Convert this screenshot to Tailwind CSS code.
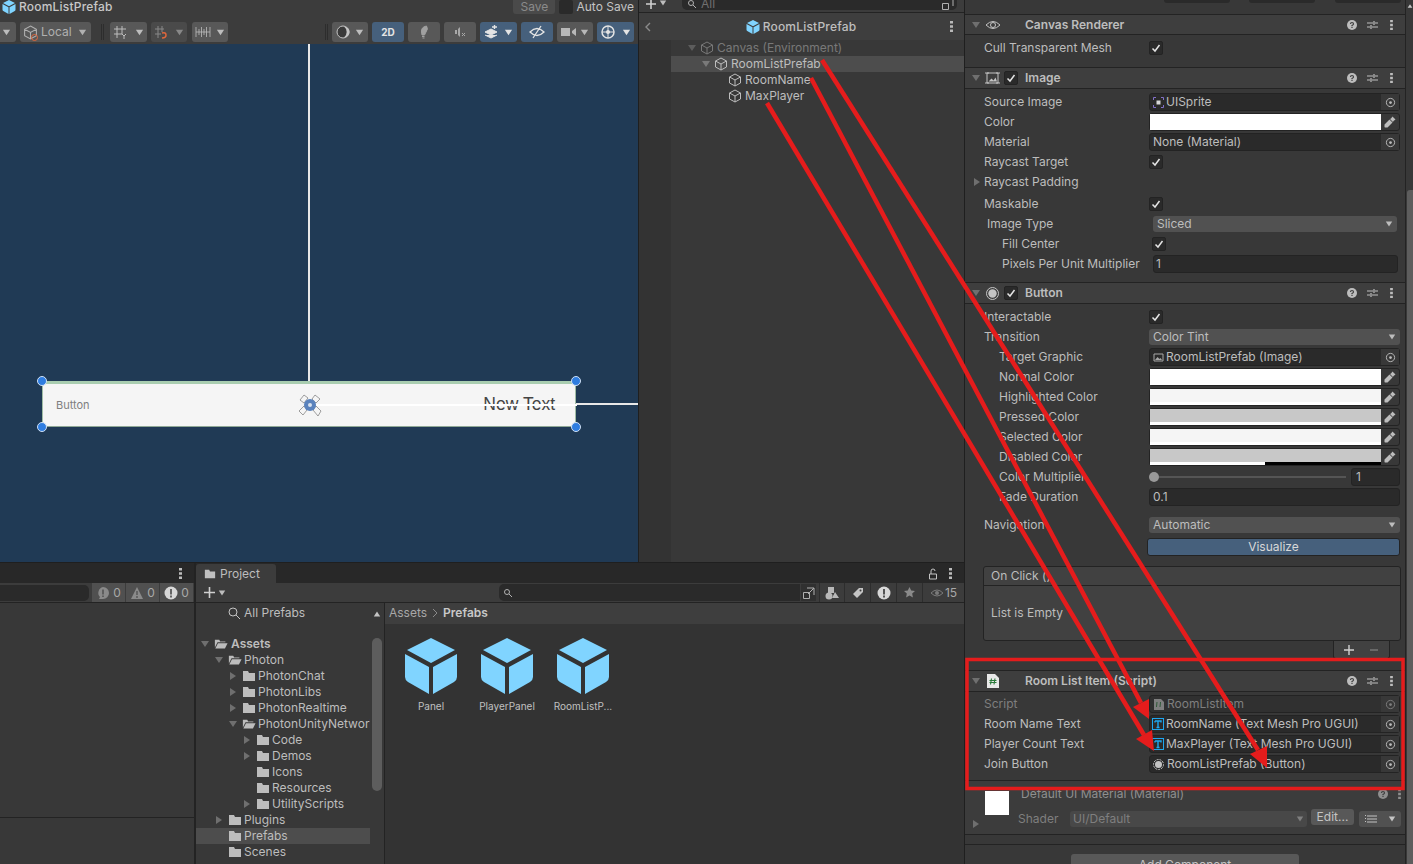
<!DOCTYPE html>
<html lang="en">

<head>
    <meta charset="UTF-8">
    <meta name="viewport" content="width=device-width, initial-scale=1.0">
    <title>Unity Editor - RoomListPrefab</title>
    <script src="https://cdn.jsdelivr.net/npm/@tailwindcss/browser@4"></script>
</head>

<body class="bg-[#1a1a1a]">

    <!-- shared icons -->
    <svg class="hidden">
        <symbol id="cube" viewBox="0 0 14 14"><path d="M7 1l5.5 3v6L7 13l-5.5-3V4zM1.5 4L7 7l5.5-3M7 7v6" fill="none" stroke="currentColor" stroke-width="1"/></symbol>
        <symbol id="prefab" viewBox="0 0 52 56"><path d="M26 0l24 12-24 13L2 12zM0 16l24 13v27L3 44q-3-2-3-5zM52 16L28 29v27l21-12q3-2 3-5z" fill="currentColor"/></symbol>
        <symbol id="down" viewBox="0 0 10 10"><path d="M1 2h8L5 8z" fill="currentColor"/></symbol>
        <symbol id="right" viewBox="0 0 10 10"><path d="M2 1v8l6-4z" fill="currentColor"/></symbol>
        <symbol id="folder" viewBox="0 0 14 12"><path d="M1 1h5l1 2h6v8H1z" fill="currentColor"/></symbol>
        <symbol id="folder-open" viewBox="0 0 16 12"><path d="M1 1h5l1 2h6v1H4L1 10zM4.500 5H15.500l-3 6H1.500z" fill="currentColor"/></symbol>
        <symbol id="target" viewBox="0 0 12 12"><circle cx="6" cy="6" r="4.500" fill="none" stroke="currentColor"/><circle cx="6" cy="6" r="1.500" fill="currentColor"/></symbol>
        <symbol id="dropper" viewBox="0 0 12 12"><path d="M8.500 .5l3 3-2 1.500-.5 1L6 3l1-.5zM5.500 3.500L8.500 6.500 3.500 11.500 1 11.500.5 11 .5 8.500z" fill="currentColor"/></symbol>
        <symbol id="check" viewBox="0 0 12 12"><path d="M2.500 6.500l2.500 2.500 4.500-6" fill="none" stroke="currentColor" stroke-width="1.500"/></symbol>
        <symbol id="help" viewBox="0 0 10 10"><circle cx="5" cy="5" r="5" fill="currentColor"/><path d="M3.500 4q0-1.500 1.500-1.500T6.500 4q0 .8-1.500 1.500v.7M5 7v1" fill="none" stroke="#3e3e3e" stroke-width="1.200"/></symbol>
        <symbol id="sliders" viewBox="0 0 11 10"><path d="M0 3h6M8 3h3M0 7h3M5 7h6M7 1v4M4 5v4" fill="none" stroke="currentColor" stroke-width="1.200"/></symbol>
        <symbol id="kebab" viewBox="0 0 3 11"><path d="M0 0h3v2.500H0zM0 4.250h3v2.500H0zM0 8.500h3V11H0z" fill="currentColor"/></symbol>
        <symbol id="tmp" viewBox="0 0 12 12"><rect x=".5" y=".5" width="11" height="11" fill="none" stroke="#1ea7f0"/><path d="M3 3h6v1.500M3 4.500V3M6 3v6.500M4.500 9.500h3" fill="none" stroke="#1ea7f0" stroke-width="1.400"/></symbol>
    </svg>

    <div class="relative flex h-[864px] w-[1413px] overflow-hidden text-[12px] leading-none font-['Inter',sans-serif] text-[#bdbdbd] whitespace-nowrap">

        <!-- scene, hierarchy, console, project -->
        <div class="flex w-[965px] flex-col border-r border-[#1f1f1f]">
            <div class="flex h-[562px]">

                <!-- scene view -->
                <section class="flex w-[639px] flex-col border-r border-[#1f1f1f] bg-[#3c3c3c]">
                    <div class="flex h-[14px] items-center justify-between overflow-hidden">
                        <div class="flex items-center gap-[3px] pb-[1px] pl-[2px] text-[#c8c8c8]">
                            <svg class="h-[14px] w-[14px] text-[#80d4ff]"><use href="#prefab"/></svg>
                            <span class="font-medium tracking-[0.2px]">RoomListPrefab</span>
                        </div>
                        <div class="flex items-center text-[#8a8a8a]">
                            <span class="flex h-[14px] w-[42px] items-center justify-center rounded-b-[3px] bg-[#4a4a4a]">Save</span>
                            <span class="ml-[4px] h-[14px] w-[14px] rounded-[2px] bg-[#2a2a2a]"></span>
                            <span class="ml-[3px] mr-[4px] text-[#c4c4c4]">Auto Save</span>
                        </div>
                    </div>
                    <div class="flex h-[30px] items-center pb-[1px] pt-[7px]">
                        <div class="flex h-5 w-[16px] items-center rounded-r-[3px] bg-[#585858] pl-[2px]"><svg class="h-[9px] w-[9px]"><use href="#down"/></svg></div>
                        <div class="ml-[4px] flex h-5 w-[71px] items-center gap-[2px] rounded-[3px] bg-[#585858] pl-[3px] text-[#b0b0b0]">
                            <span class="relative"><svg class="block h-[15px] w-[15px]"><use href="#cube"/></svg><span class="absolute -bottom-[1px] right-0 h-[7px] w-[7px] rounded-full border border-[#e0673c]"></span></span>
                            <span class="ml-[1px]">Local</span><svg class="ml-[4px] h-[9px] w-[9px]"><use href="#down"/></svg>
                        </div>
                        <div class="ml-[10px] h-4 w-[3px] border-x border-[#2d2d2d]"></div>
                        <div class="ml-[6px] flex h-5 w-[37px] items-center justify-between rounded-[3px] bg-[#585858] px-[3px]">
                            <svg class="h-[14px] w-[14px]" viewBox="0 0 14 14"><path d="M1 4h12M1 9h8M4 1v12M9 1v8M9 9l2 2 2-2M11 11v3" fill="none" stroke="currentColor"/></svg>
                            <svg class="h-[9px] w-[9px]"><use href="#down"/></svg>
                        </div>
                        <div class="ml-[4px] flex h-5 w-[36px] items-center justify-between rounded-[3px] bg-[#4a4a4a] px-[3px] text-[#888888]">
                            <svg class="h-[14px] w-[14px]" viewBox="0 0 14 14"><path d="M1 4h9M1 9h6M4 1v12M8 1v6" fill="none" stroke="currentColor"/><path d="M8 8q4-1 4 2t-4 3" fill="none" stroke="#e0673c" stroke-width="1.500"/></svg>
                            <svg class="h-[9px] w-[9px]"><use href="#down"/></svg>
                        </div>
                        <div class="ml-[5px] flex h-5 w-[36px] items-center justify-between rounded-[3px] bg-[#585858] px-[3px]">
                            <svg class="h-[14px] w-[16px]" viewBox="0 0 16 14"><path d="M1 2v10M15 2v10M1 7h14M4 4v6M6.500 2v10M9 4v6M11.500 2v10" fill="none" stroke="currentColor" stroke-width=".8"/></svg>
                            <svg class="h-[9px] w-[9px]"><use href="#down"/></svg>
                        </div>
                        <div class="ml-[97px] h-4 w-[3px] border-x border-[#2d2d2d]"></div>
                        <div class="ml-[4px] flex h-5 w-[36px] items-center justify-between rounded-[3px] bg-[#585858] px-[4px]">
                            <svg class="h-[14px] w-[14px]" viewBox="0 0 14 14"><circle cx="7" cy="7" r="6" fill="#3a3a3a" stroke="#c4c4c4"/><path d="M8 1.500a5.500 5.500 0 0 1 0 11 7 7 0 0 0 0-11z" fill="#c4c4c4"/></svg>
                            <svg class="h-[9px] w-[9px]"><use href="#down"/></svg>
                        </div>
                        <div class="ml-[4px] flex h-5 w-[32px] items-center justify-center rounded-[3px] bg-[#46607c] text-[10px] font-bold text-[#e4e4e4]">2D</div>
                        <div class="ml-[4px] flex h-5 w-[32px] items-center justify-center rounded-[3px] bg-[#585858]">
                            <svg class="h-[14px] w-[14px]" viewBox="0 0 14 14"><path d="M9.500 1q2 3-.5 6l-1.500 3H5L4.500 7Q4 2 9.500 1zM5 11.500h2.500M5.500 13h2" fill="#a0a0a0" stroke="#a0a0a0" stroke-width="1"/></svg>
                        </div>
                        <div class="ml-[4px] flex h-5 w-[32px] items-center justify-center rounded-[3px] bg-[#585858]">
                            <svg class="h-[12px] w-[12px]" viewBox="0 0 12 12"><path d="M1 4h2v4H1zM4 3l2-2v10L4 9z" fill="#a8a8a8"/><path d="M8 7l3 3M11 7l-3 3" stroke="#a8a8a8" fill="none"/></svg>
                        </div>
                        <div class="ml-[4px] flex h-5 w-[37px] items-center justify-between rounded-[3px] bg-[#46607c] px-[4px] text-[#e4e4e4]">
                            <svg class="h-[14px] w-[14px]" viewBox="0 0 14 14"><path d="M1 7l6-3 6 3-6 3zM1 10l6 3 6-3" fill="currentColor" stroke="currentColor"/><path d="M8 2h5M10.500 0v4" fill="none" stroke="currentColor" stroke-width="1.400"/></svg>
                            <svg class="h-[9px] w-[9px]"><use href="#down"/></svg>
                        </div>
                        <div class="ml-[4px] flex h-5 w-[32px] items-center justify-center rounded-[3px] bg-[#46607c] text-[#e4e4e4]">
                            <svg class="h-[14px] w-[16px]" viewBox="0 0 16 14"><path d="M1 7q7-7 14 0-7 7-14 0zM4 13L12 1" fill="none" stroke="currentColor" stroke-width="1.300"/></svg>
                        </div>
                        <div class="ml-[4px] flex h-5 w-[36px] items-center justify-between rounded-[3px] bg-[#585858] px-[4px] text-[#b8b8b8]">
                            <svg class="h-[12px] w-[16px]" viewBox="0 0 16 12"><path d="M0 2h9v8H0zM11 5l4-3v8l-4-3z" fill="currentColor"/></svg>
                            <svg class="h-[9px] w-[9px]"><use href="#down"/></svg>
                        </div>
                        <div class="ml-[4px] flex h-5 w-[37px] items-center justify-between rounded-[3px] bg-[#46607c] px-[3px] text-[#e4e4e4]">
                            <svg class="h-[16px] w-[16px]" viewBox="0 0 16 16"><circle cx="8" cy="8" r="6" fill="none" stroke="currentColor" stroke-width="1.500"/><path d="M2 8h12M8 2v12" stroke="currentColor"/><circle cx="8" cy="8" r="2" fill="currentColor"/></svg>
                            <svg class="h-[9px] w-[9px]"><use href="#down"/></svg>
                        </div>
                    </div>

                    <!-- canvas with the prefab button -->
                    <div class="relative flex-1 bg-[#203a55]">
                        <div class="absolute left-[308px] top-0 h-[337px] w-[2px] bg-[#e8e8e8]"></div>
                        <div class="absolute left-[576px] top-[359px] h-[2px] w-[62px] bg-[#e8e8e8]"></div>
                        <div class="absolute left-[42px] top-[337px] flex h-[46px] w-[534px] items-center justify-between border-x border-b border-t-[3px] border-x-[#a0bda5] border-b-[#8fa896] border-t-[#a9cdb0] bg-[#f5f5f5] pl-[13px] pr-[20px]">
                            <span class="text-[11px] text-[#7f7f7f]">Button</span>
                            <span class="text-[17.5px] font-['Liberation_Sans',sans-serif] text-[#444444]">New Text</span>
                            <div class="absolute left-[266px] top-[20px] h-[2px] w-[268px] bg-white"></div>
                        </div>
                        <div class="absolute left-[37px] top-[332px] h-[10px] w-[10px] rounded-full border border-[#cfe0f5] bg-[#2f7de0]"></div>
                        <div class="absolute left-[571px] top-[332px] h-[10px] w-[10px] rounded-full border border-[#cfe0f5] bg-[#2f7de0]"></div>
                        <div class="absolute left-[37px] top-[378px] h-[10px] w-[10px] rounded-full border border-[#cfe0f5] bg-[#2f7de0]"></div>
                        <div class="absolute left-[571px] top-[378px] h-[10px] w-[10px] rounded-full border border-[#cfe0f5] bg-[#2f7de0]"></div>
                        <svg class="absolute left-[298px] top-[349px] h-6 w-6" viewBox="0 0 24 24">
                            <path d="M2 7l4-5 4 3-4 5zM17 2l5 4-4 4-4-4zM1 18l5-5 3 4-4 5zM18 13l5 5-3 5-5-6z" fill="#f5f5f5" stroke="#777777" stroke-width=".7"/>
                            <circle cx="12" cy="12" r="6" fill="#5b83bd"/><circle cx="12" cy="12" r="2" fill="#d8e2ee"/>
                        </svg>
                    </div>
                </section>

                <!-- hierarchy -->
                <section class="flex flex-1 flex-col bg-[#383838]">
                    <div class="flex h-[13px] items-center overflow-hidden border-b border-[#232323] bg-[#3c3c3c]">
                        <svg class="ml-[6px] h-[12px] w-[12px] -translate-y-[2px]" viewBox="0 0 12 12"><path d="M6 1v10M1 6h10" stroke="#d0d0d0" stroke-width="1.600"/></svg>
                        <svg class="ml-[2px] h-2 w-2 -translate-y-[3px]"><use href="#down"/></svg>
                        <div class="ml-[15px] flex h-[18px] w-[275px] -translate-y-[5px] items-center justify-between rounded-[5px] bg-[#2a2a2a] pl-[5px] pt-[6px] text-[#707070]">
                            <span class="flex items-center gap-[4px]"><svg class="h-[10px] w-[10px]" viewBox="0 0 10 10"><circle cx="4" cy="4" r="2.500" fill="none" stroke="#b0b0b0"/><path d="M6 6l3 3" stroke="#b0b0b0"/></svg>All</span>
                            <svg class="mr-[3px] h-[12px] w-[12px]" viewBox="0 0 12 12"><path d="M.5 5.500v6h6v-6zM4 1h7v7" fill="none" stroke="#b0b0b0"/></svg>
                        </div>
                    </div>
                    <div class="flex h-[27px] items-center justify-between bg-[#3e3e3e] pl-[5px] pr-[11px]">
                        <svg class="h-[12px] w-[8px]" viewBox="0 0 8 12"><path d="M6 2L2 6l4 4" fill="none" stroke="#8a8a8a" stroke-width="1.400"/></svg>
                        <div class="flex items-center gap-[3px] font-medium tracking-[0.2px] text-[#bfbfbf]"><svg class="h-[14px] w-[14px] text-[#80d4ff]"><use href="#prefab"/></svg>RoomListPrefab</div>
                        <svg class="h-[11px] w-[3px] text-[#b8b8b8]"><use href="#kebab"/></svg>
                    </div>
                    <div class="flex flex-1">
                        <div class="w-[32px] bg-[#333333]"></div>
                        <div class="flex-1">
                            <div class="flex h-[16px] items-center pl-[16px] text-[#787878]"><svg class="h-[10px] w-[10px] text-[#5c5c5c]"><use href="#down"/></svg><svg class="ml-[3px] h-[14px] w-[14px]"><use href="#cube"/></svg><span class="ml-[3px]">Canvas (Environment)</span></div>
                            <div class="flex h-[16px] items-center bg-[#4d4d4d] pl-[30px]"><svg class="h-[10px] w-[10px] text-[#7a7a7a]"><use href="#down"/></svg><svg class="ml-[3px] h-[14px] w-[14px]"><use href="#cube"/></svg><span class="ml-[3px]">RoomListPrefab</span></div>
                            <div class="flex h-[16px] items-center pl-[57px]"><svg class="h-[14px] w-[14px]"><use href="#cube"/></svg><span class="ml-[3px]">RoomName</span></div>
                            <div class="flex h-[16px] items-center pl-[57px]"><svg class="h-[14px] w-[14px]"><use href="#cube"/></svg><span class="ml-[3px]">MaxPlayer</span></div>
                        </div>
                    </div>
                </section>
            </div>

            <div class="flex flex-1 border-t border-[#1f1f1f]">

                <!-- console -->
                <section class="flex w-[196px] flex-col border-r-2 border-[#232323] bg-[#383838]">
                    <div class="flex h-[20px] items-center justify-end bg-[#282828] pr-[12px]"><svg class="h-[11px] w-[3px]"><use href="#kebab"/></svg></div>
                    <div class="flex h-[20px] items-center border-b border-[#232323] bg-[#3c3c3c]">
                        <div class="h-[16px] w-[89px] rounded-r-[5px] bg-[#2a2a2a]"></div>
                        <div class="ml-[3px] flex h-full w-[33px] items-center justify-center gap-[3px] bg-[#505050] text-[#a8a8a8]"><svg class="h-[14px] w-[14px]" viewBox="0 0 14 14"><path d="M7 1a6 6 0 0 1 0 12H3l1-2a6 6 0 0 1 3-10z" fill="#8a8a8a"/><path d="M7 3.500v5M7 9.500v1.500" stroke="#505050" stroke-width="1.500"/></svg>0</div>
                        <div class="ml-[1px] flex h-full w-[33px] items-center justify-center gap-[3px] bg-[#505050] text-[#a8a8a8]"><svg class="h-[14px] w-[14px]" viewBox="0 0 14 14"><path d="M7 1l6 12H1z" fill="#8a8a8a"/><path d="M7 5v4M7 10v2" stroke="#505050" stroke-width="1.300"/></svg>0</div>
                        <div class="ml-[1px] flex h-full w-[33px] items-center justify-center gap-[3px] bg-[#505050] text-[#a8a8a8]"><svg class="h-[14px] w-[14px]" viewBox="0 0 14 14"><circle cx="7" cy="7" r="6.500" fill="#d8d8d8"/><path d="M7 3v5.500M7 9.500V11.500" stroke="#505050" stroke-width="1.700"/></svg>0</div>
                    </div>
                    <div class="h-[215px] border-b border-[#232323]"></div>
                    <div class="flex-1"></div>
                </section>

                <!-- project -->
                <section class="flex flex-1 flex-col">
                    <div class="flex h-[20px] items-end justify-between bg-[#282828] pr-[12px]">
                        <div class="flex h-[19px] w-[80px] items-center gap-[4px] rounded-t-[3px] bg-[#3c3c3c] pl-[8px]"><svg class="h-[12px] w-[12px] text-[#c0c0c0]"><use href="#folder"/></svg>Project</div>
                        <div class="flex h-[19px] items-center gap-[11px]">
                            <svg class="h-[12px] w-[10px]" viewBox="0 0 10 12"><path d="M1.500 6h7v5h-7zM3 6V3q0-2 2-2t2 2" fill="none" stroke="#c4c4c4"/></svg>
                            <svg class="h-[11px] w-[3px]"><use href="#kebab"/></svg>
                        </div>
                    </div>
                    <div class="flex h-[20px] items-center border-b border-[#232323] bg-[#3c3c3c] pl-[7px]">
                        <svg class="h-[13px] w-[13px]" viewBox="0 0 13 13"><path d="M6.500 1v11M1 6.500h11" stroke="#d0d0d0" stroke-width="1.600"/></svg>
                        <svg class="ml-[2px] h-2 w-2"><use href="#down"/></svg>
                        <div class="ml-[273px] flex h-[17px] w-[317px] items-center justify-between rounded-[5px] bg-[#2a2a2a] pl-[4px]">
                            <svg class="h-[10px] w-[10px]" viewBox="0 0 10 10"><circle cx="4" cy="4" r="2.500" fill="none" stroke="#b0b0b0"/><path d="M6 6l3 3" stroke="#b0b0b0"/></svg>
                            <span class="flex h-full w-[16px] items-center justify-center border-l border-[#3c3c3c] bg-[#303030]"><svg class="h-[12px] w-[12px]" viewBox="0 0 12 12"><path d="M.5 5.500v6h6v-6zM4 1h7v7M5 7l6-6" fill="none" stroke="#b0b0b0"/></svg></span>
                        </div>
                        <div class="ml-[3px] flex h-full w-[26px] items-center justify-center border-x border-[#2d2d2d]"><svg class="h-[14px] w-[14px]" viewBox="0 0 14 14"><path d="M3 1h6v6H3z M10 6l4 6H7z" fill="#b8b8b8"/><circle cx="4" cy="10" r="3.500" fill="#b8b8b8"/></svg></div>
                        <div class="flex h-full w-[26px] items-center justify-center border-r border-[#2d2d2d]"><svg class="h-[12px] w-[12px]" viewBox="0 0 12 12"><path d="M7 1h4v4l-6 6-4-4z" fill="#c4c4c4"/><circle cx="8.500" cy="3.500" r="1" fill="#3c3c3c"/></svg></div>
                        <div class="flex h-full w-[26px] items-center justify-center border-r border-[#2d2d2d]"><svg class="h-[14px] w-[14px]" viewBox="0 0 14 14"><circle cx="7" cy="7" r="6.500" fill="#d8d8d8"/><path d="M7 3v5.500M7 9.500v2" stroke="#3c3c3c" stroke-width="1.700"/></svg></div>
                        <div class="flex h-full w-[26px] items-center justify-center border-r border-[#2d2d2d]"><svg class="h-[13px] w-[13px]" viewBox="0 0 13 13"><path d="M6.500 1l1.700 3.500 3.800.5-2.800 2.600.7 3.900-3.400-1.900-3.400 1.900.7-3.900L1 5l3.800-.5z" fill="#8a8a8a"/></svg></div>
                        <div class="flex h-full flex-1 items-center justify-center gap-[1px] text-[#a8a8a8]"><svg class="h-[10px] w-[14px]" viewBox="0 0 14 10"><path d="M1 5q6-6 12 0-6 6-12 0z" fill="none" stroke="#7a7a7a"/><circle cx="7" cy="5" r="2" fill="#7a7a7a"/></svg>15</div>
                    </div>
                    <div class="flex flex-1 overflow-hidden">

                        <!-- folder tree -->
                        <div class="w-[174px] overflow-hidden bg-[#383838]">
                            <div class="mt-[2px] flex h-[16px] items-center pl-[31px]"><svg class="mr-[3px] h-[14px] w-[14px]" viewBox="0 0 14 14"><circle cx="6" cy="6" r="4" fill="none" stroke="#c4c4c4"/><path d="M9 9l4 4" stroke="#c4c4c4"/></svg>All Prefabs</div>
                            <div class="mt-[15px] flex h-[16px] items-center pl-[4px] font-semibold"><svg class="mr-[4px] h-[10px] w-[10px] shrink-0 text-[#6f6f6f]"><use href="#down"/></svg><svg class="mr-[3px] h-[12px] w-[14px] shrink-0"><use href="#folder-open"/></svg>Assets</div>
                            <div class="flex h-[16px] items-center pl-[18px]"><svg class="mr-[4px] h-[10px] w-[10px] shrink-0 text-[#6f6f6f]"><use href="#down"/></svg><svg class="mr-[2px] h-[12px] w-[14px] shrink-0"><use href="#folder-open"/></svg>Photon</div>
                            <div class="flex h-[16px] items-center pl-[32px]"><svg class="mr-[4px] h-[10px] w-[10px] shrink-0 text-[#6f6f6f]"><use href="#right"/></svg><svg class="mr-[2px] h-[12px] w-[14px] shrink-0"><use href="#folder"/></svg>PhotonChat</div>
                            <div class="flex h-[16px] items-center pl-[32px]"><svg class="mr-[4px] h-[10px] w-[10px] shrink-0 text-[#6f6f6f]"><use href="#right"/></svg><svg class="mr-[2px] h-[12px] w-[14px] shrink-0"><use href="#folder"/></svg>PhotonLibs</div>
                            <div class="flex h-[16px] items-center pl-[32px]"><svg class="mr-[4px] h-[10px] w-[10px] shrink-0 text-[#6f6f6f]"><use href="#right"/></svg><svg class="mr-[2px] h-[12px] w-[14px] shrink-0"><use href="#folder"/></svg>PhotonRealtime</div>
                            <div class="flex h-[16px] items-center pl-[32px]"><svg class="mr-[4px] h-[10px] w-[10px] shrink-0 text-[#6f6f6f]"><use href="#down"/></svg><svg class="mr-[2px] h-[12px] w-[14px] shrink-0"><use href="#folder-open"/></svg>PhotonUnityNetworking</div>
                            <div class="flex h-[16px] items-center pl-[46px]"><svg class="mr-[4px] h-[10px] w-[10px] shrink-0 text-[#6f6f6f]"><use href="#right"/></svg><svg class="mr-[2px] h-[12px] w-[14px] shrink-0"><use href="#folder"/></svg>Code</div>
                            <div class="flex h-[16px] items-center pl-[46px]"><svg class="mr-[4px] h-[10px] w-[10px] shrink-0 text-[#6f6f6f]"><use href="#right"/></svg><svg class="mr-[2px] h-[12px] w-[14px] shrink-0"><use href="#folder"/></svg>Demos</div>
                            <div class="flex h-[16px] items-center pl-[60px]"><svg class="mr-[2px] h-[12px] w-[14px] shrink-0"><use href="#folder"/></svg>Icons</div>
                            <div class="flex h-[16px] items-center pl-[60px]"><svg class="mr-[2px] h-[12px] w-[14px] shrink-0"><use href="#folder"/></svg>Resources</div>
                            <div class="flex h-[16px] items-center pl-[46px]"><svg class="mr-[4px] h-[10px] w-[10px] shrink-0 text-[#6f6f6f]"><use href="#right"/></svg><svg class="mr-[2px] h-[12px] w-[14px] shrink-0"><use href="#folder"/></svg>UtilityScripts</div>
                            <div class="flex h-[16px] items-center pl-[18px]"><svg class="mr-[4px] h-[10px] w-[10px] shrink-0 text-[#6f6f6f]"><use href="#right"/></svg><svg class="mr-[2px] h-[12px] w-[14px] shrink-0"><use href="#folder"/></svg>Plugins</div>
                            <div class="flex h-[16px] items-center bg-[#4d4d4d] pl-[32px]"><svg class="mr-[2px] h-[12px] w-[14px] shrink-0"><use href="#folder"/></svg>Prefabs</div>
                            <div class="flex h-[16px] items-center pl-[32px]"><svg class="mr-[2px] h-[12px] w-[14px] shrink-0"><use href="#folder"/></svg>Scenes</div>
                        </div>
                        <div class="flex w-[15px] flex-col items-center border-r border-[#232323] bg-[#383838] pt-[7px]">
                            <svg class="h-[8px] w-[8px] rotate-180 text-[#c4c4c4]"><use href="#down"/></svg>
                            <div class="mt-[20px] h-[153px] w-[10px] rounded-[5px] bg-[#5d5d5d]"></div>
                        </div>

                        <!-- prefab assets -->
                        <div class="flex flex-1 flex-col bg-[#333333]">
                            <div class="flex h-[21px] items-center bg-[#3e3e3e] pb-[1px] pl-[4px] text-[#a8a8a8]">Assets<svg class="mx-[5px] h-[10px] w-[6px]" viewBox="0 0 6 10"><path d="M1 1l4 4-4 4" fill="none" stroke="#8a8a8a"/></svg><span class="font-semibold text-[#c8c8c8]">Prefabs</span></div>
                            <div class="flex pl-[8px] pt-[14px] text-[10px] text-[#c0c0c0]">
                                <div class="flex w-[76px] flex-col items-center gap-[7px]"><svg class="h-[56px] w-[52px] text-[#80d4ff]"><use href="#prefab"/></svg>Panel</div>
                                <div class="flex w-[76px] flex-col items-center gap-[7px]"><svg class="h-[56px] w-[52px] text-[#80d4ff]"><use href="#prefab"/></svg>PlayerPanel</div>
                                <div class="flex w-[76px] flex-col items-center gap-[7px]"><svg class="h-[56px] w-[52px] text-[#80d4ff]"><use href="#prefab"/></svg>RoomListP...</div>
                            </div>
                        </div>
                    </div>
                </section>
            </div>
        </div>

        <!-- inspector -->
        <aside class="flex flex-1 overflow-hidden bg-[#383838]">
            <div class="w-[440px] shrink-0">
                <div class="flex h-[14px] items-start pl-[199px] text-[0px]">
                    <span class="h-[3px] w-[66px] rounded-b-[3px] bg-[#2a2a2a]"></span>
                    <span class="ml-[19px] h-[3px] w-[66px] rounded-b-[3px] bg-[#2a2a2a]"></span>
                    <span class="ml-[20px] h-[3px] w-[66px] rounded-b-[3px] bg-[#2a2a2a]"></span>
                </div>

                <!-- canvas renderer -->
                <div class="flex h-[21px] items-center border-y border-y-[#232323] bg-[#3e3e3e] pl-[6px] pr-[12px]">
                    <svg class="h-[10px] w-[10px] text-[#6f6f6f]"><use href="#down"/></svg>
                    <svg class="ml-[4px] h-[16px] w-[16px]" viewBox="0 0 16 16"><path d="M1 8q7-7 14 0-7 7-14 0z" fill="none" stroke="#c4c4c4"/><circle cx="8" cy="8" r="2.500" fill="none" stroke="#c4c4c4"/></svg>
                    <span class="ml-[24px] font-semibold">Canvas Renderer</span>
                    <span class="ml-auto flex items-center gap-[10px]"><svg class="h-[10px] w-[10px]"><use href="#help"/></svg><svg class="h-[10px] w-[11px]"><use href="#sliders"/></svg><svg class="ml-[2px] h-[10px] w-[3px]"><use href="#kebab"/></svg></span>
                </div>
                <div class="mt-[3px] flex h-5 items-center pl-[19px]"><span class="w-[165px]">Cull Transparent Mesh</span><span class="flex h-[14px] w-[14px] items-center justify-center rounded-[2px] border border-[#232323] bg-[#2a2a2a] text-[#e4e4e4]"><svg class="h-[12px] w-[12px]"><use href="#check"/></svg></span></div>

                <!-- image -->
                <div class="mt-[9px] flex h-[22px] items-center border-y border-y-[#232323] bg-[#3e3e3e] pl-[6px] pr-[12px]">
                    <svg class="h-[10px] w-[10px] text-[#6f6f6f]"><use href="#down"/></svg>
                    <svg class="ml-[4px] h-[14px] w-[15px]" viewBox="0 0 15 14"><path d="M2 2h11v10H2zM0 2h4M11 2h4M0 12h4M11 12h4" fill="none" stroke="#c4c4c4"/><path d="M3.500 10.500l3-3 2 2 2-3 1.500 4z" fill="#c4c4c4"/></svg>
                    <span class="ml-[4px] flex h-[14px] w-[14px] items-center justify-center rounded-[2px] border border-[#232323] bg-[#2a2a2a] text-[#e4e4e4]"><svg class="h-[12px] w-[12px]"><use href="#check"/></svg></span>
                    <span class="ml-[7px] font-semibold">Image</span>
                    <span class="ml-auto flex items-center gap-[10px]"><svg class="h-[10px] w-[10px]"><use href="#help"/></svg><svg class="h-[10px] w-[11px]"><use href="#sliders"/></svg><svg class="ml-[2px] h-[10px] w-[3px]"><use href="#kebab"/></svg></span>
                </div>
                <div class="mt-[3px] flex h-5 items-center pl-[19px]"><span class="w-[165px]">Source Image</span><div class="flex h-[18px] w-[251px] items-center justify-between rounded-[3px] border border-[#232323] bg-[#2a2a2a]"><span class="flex items-center gap-[2px] pl-[3px]"><svg class="h-[11px] w-[11px]" viewBox="0 0 11 11"><path d="M.5 3V.5H3M8 .5h2.500V3M10.500 8v2.500H8M3 10.500H.5V8" fill="none" stroke="#8270c8"/><rect x="3.500" y="3.500" width="4" height="4" fill="#d8d8d8"/></svg>UISprite</span><span class="flex h-full w-[18px] items-center justify-center bg-[#383838]"><svg class="h-[11px] w-[11px]"><use href="#target"/></svg></span></div></div>
                <div class="flex h-5 items-center pl-[19px]"><span class="w-[165px]">Color</span><div class="flex h-[18px] w-[251px] items-center rounded-[3px] border border-[#232323] bg-[#383838]"><span class="h-full flex-1 bg-white"></span><span class="flex w-[18px] justify-center"><svg class="h-[12px] w-[12px]"><use href="#dropper"/></svg></span></div></div>
                <div class="flex h-5 items-center pl-[19px]"><span class="w-[165px]">Material</span><div class="flex h-[18px] w-[251px] items-center justify-between rounded-[3px] border border-[#232323] bg-[#2a2a2a] pl-[3px]">None (Material)<span class="flex h-full w-[18px] items-center justify-center bg-[#383838]"><svg class="h-[11px] w-[11px]"><use href="#target"/></svg></span></div></div>
                <div class="flex h-5 items-center pl-[19px]"><span class="w-[165px]">Raycast Target</span><span class="flex h-[14px] w-[14px] items-center justify-center rounded-[2px] border border-[#232323] bg-[#2a2a2a] text-[#e4e4e4]"><svg class="h-[12px] w-[12px]"><use href="#check"/></svg></span></div>
                <div class="relative flex h-5 items-center pl-[19px]"><svg class="absolute left-[7px] h-[10px] w-[10px] text-[#6f6f6f]"><use href="#right"/></svg><span class="w-[165px]">Raycast Padding</span></div>
                <div class="mt-[2px] flex h-5 items-center pl-[19px]"><span class="w-[165px]">Maskable</span><span class="flex h-[14px] w-[14px] items-center justify-center rounded-[2px] border border-[#232323] bg-[#2a2a2a] text-[#e4e4e4]"><svg class="h-[12px] w-[12px]"><use href="#check"/></svg></span></div>
                <div class="flex h-5 items-center pl-[22px]"><span class="w-[166px]">Image Type</span><div class="flex h-[16px] w-[244px] items-center justify-between rounded-[3px] bg-[#515151] px-[4px]">Sliced<svg class="h-2 w-2"><use href="#down"/></svg></div></div>
                <div class="flex h-5 items-center pl-[37px]"><span class="w-[150px]">Fill Center</span><span class="flex h-[14px] w-[14px] items-center justify-center rounded-[2px] border border-[#232323] bg-[#2a2a2a] text-[#e4e4e4]"><svg class="h-[12px] w-[12px]"><use href="#check"/></svg></span></div>
                <div class="flex h-5 items-center pl-[37px]"><span class="w-[151px]">Pixels Per Unit Multiplier</span><div class="flex h-[18px] w-[245px] items-center rounded-[3px] border border-[#232323] bg-[#2a2a2a] pl-[2px]">1</div></div>

                <!-- button -->
                <div class="mt-[8px] flex h-[22px] items-center border-y border-y-[#232323] bg-[#3e3e3e] pl-[6px] pr-[12px]">
                    <svg class="h-[10px] w-[10px] text-[#6f6f6f]"><use href="#down"/></svg>
                    <svg class="ml-[5px] h-[13px] w-[13px]" viewBox="0 0 13 13"><circle cx="6.500" cy="6.500" r="6" fill="none" stroke="#c4c4c4"/><circle cx="6.500" cy="6.500" r="4.200" fill="#c4c4c4"/></svg>
                    <span class="ml-[5px] flex h-[14px] w-[14px] items-center justify-center rounded-[2px] border border-[#232323] bg-[#2a2a2a] text-[#e4e4e4]"><svg class="h-[12px] w-[12px]"><use href="#check"/></svg></span>
                    <span class="ml-[7px] font-semibold">Button</span>
                    <span class="ml-auto flex items-center gap-[10px]"><svg class="h-[10px] w-[10px]"><use href="#help"/></svg><svg class="h-[10px] w-[11px]"><use href="#sliders"/></svg><svg class="ml-[2px] h-[10px] w-[3px]"><use href="#kebab"/></svg></span>
                </div>
                <div class="mt-[3px] flex h-5 items-center pl-[19px]"><span class="w-[165px]">Interactable</span><span class="flex h-[14px] w-[14px] items-center justify-center rounded-[2px] border border-[#232323] bg-[#2a2a2a] text-[#e4e4e4]"><svg class="h-[12px] w-[12px]"><use href="#check"/></svg></span></div>
                <div class="flex h-5 items-center pl-[19px]"><span class="w-[165px]">Transition</span><div class="flex h-[16px] w-[251px] items-center justify-between rounded-[3px] bg-[#515151] px-[4px]">Color Tint<svg class="h-2 w-2"><use href="#down"/></svg></div></div>
                <div class="flex h-5 items-center pl-[34px]"><span class="w-[150px]">Target Graphic</span><div class="flex h-[18px] w-[251px] items-center justify-between rounded-[3px] border border-[#232323] bg-[#2a2a2a]"><span class="flex items-center gap-[2px] pl-[3px]"><svg class="h-[11px] w-[11px]" viewBox="0 0 11 11"><path d="M1 2h9v7H1z" fill="none" stroke="#a8a8a8"/><path d="M2 8l2.500-3 2 2 1-1 1.500 2z" fill="#a8a8a8"/></svg>RoomListPrefab (Image)</span><span class="flex h-full w-[18px] items-center justify-center bg-[#383838]"><svg class="h-[11px] w-[11px]"><use href="#target"/></svg></span></div></div>
                <div class="flex h-5 items-center pl-[34px]"><span class="w-[150px]">Normal Color</span><div class="flex h-[18px] w-[251px] items-center rounded-[3px] border border-[#232323] bg-[#383838]"><span class="h-full flex-1 bg-white"></span><span class="flex w-[18px] justify-center"><svg class="h-[12px] w-[12px]"><use href="#dropper"/></svg></span></div></div>
                <div class="flex h-5 items-center pl-[34px]"><span class="w-[150px]">Highlighted Color</span><div class="flex h-[18px] w-[251px] items-center rounded-[3px] border border-[#232323] bg-[#383838]"><span class="h-full flex-1 border-b-[3px] border-white bg-[#f5f5f5]"></span><span class="flex w-[18px] justify-center"><svg class="h-[12px] w-[12px]"><use href="#dropper"/></svg></span></div></div>
                <div class="flex h-5 items-center pl-[34px]"><span class="w-[150px]">Pressed Color</span><div class="flex h-[18px] w-[251px] items-center rounded-[3px] border border-[#232323] bg-[#383838]"><span class="h-full flex-1 border-b-[3px] border-white bg-[#c8c8c8]"></span><span class="flex w-[18px] justify-center"><svg class="h-[12px] w-[12px]"><use href="#dropper"/></svg></span></div></div>
                <div class="flex h-5 items-center pl-[34px]"><span class="w-[150px]">Selected Color</span><div class="flex h-[18px] w-[251px] items-center rounded-[3px] border border-[#232323] bg-[#383838]"><span class="h-full flex-1 border-b-[3px] border-white bg-[#f5f5f5]"></span><span class="flex w-[18px] justify-center"><svg class="h-[12px] w-[12px]"><use href="#dropper"/></svg></span></div></div>
                <div class="flex h-5 items-center pl-[34px]"><span class="w-[150px]">Disabled Color</span><div class="flex h-[18px] w-[251px] items-center rounded-[3px] border border-[#232323] bg-[#383838]"><span class="flex h-full flex-1 flex-col justify-end bg-[#c8c8c8]"><span class="h-[3px] bg-[linear-gradient(to_right,#ffffff_50%,#000000_50%)]"></span></span><span class="flex w-[18px] justify-center"><svg class="h-[12px] w-[12px]"><use href="#dropper"/></svg></span></div></div>
                <div class="flex h-5 items-center pl-[34px]"><span class="w-[150px]">Color Multiplier</span><div class="flex w-[197px] items-center"><span class="h-[10px] w-[10px] rounded-full bg-[#999999]"></span><span class="h-[2px] flex-1 bg-[#555555]"></span></div><div class="ml-[5px] flex h-[18px] w-[49px] items-center rounded-[3px] border border-[#232323] bg-[#2a2a2a] pl-[4px]">1</div></div>
                <div class="flex h-5 items-center pl-[34px]"><span class="w-[150px]">Fade Duration</span><div class="flex h-[18px] w-[251px] items-center rounded-[3px] border border-[#232323] bg-[#2a2a2a] pl-[3px]">0.1</div></div>
                <div class="mt-[8px] flex h-5 items-center pl-[19px]"><span class="w-[165px]">Navigation</span><div class="flex h-[16px] w-[251px] items-center justify-between rounded-[3px] bg-[#515151] px-[4px]">Automatic<svg class="h-2 w-2"><use href="#down"/></svg></div></div>
                <div class="mt-[3px] flex h-[18px] pl-[182px]"><div class="flex w-[253px] items-center justify-center rounded-[3px] border border-[#232323] bg-[#46607c] text-[#d8d8d8]">Visualize</div></div>

                <!-- on click list -->
                <div class="ml-[18px] mr-[4px] mt-[10px] h-[75px] rounded-[3px] border border-[#232323] bg-[#414141]">
                    <div class="flex h-[19px] items-center border-b border-[#232323] pl-[7px]">On Click ()</div>
                    <div class="flex h-[53px] items-center pl-[7px]">List is Empty</div>
                </div>
                <div class="ml-[368px] flex h-[18px] w-[57px] items-center justify-center gap-[15px] rounded-b-[3px] border-x border-b border-[#232323] bg-[#414141] text-[#7a7a7a]">
                    <svg class="h-[10px] w-[10px]" viewBox="0 0 10 10"><path d="M5 0v10M0 5h10" stroke="#d0d0d0" stroke-width="1.400"/></svg>
                    <svg class="h-[10px] w-[10px]" viewBox="0 0 10 10"><path d="M1 5h8" stroke="#7a7a7a" stroke-width="1.400"/></svg>
                </div>

                <!-- room list item -->
                <div class="mt-[11px] flex h-[22px] items-center border-y border-y-[#232323] bg-[#3e3e3e] pl-[6px] pr-[12px]">
                    <svg class="h-[10px] w-[10px] text-[#6f6f6f]"><use href="#down"/></svg>
                    <svg class="ml-[6px] h-[14px] w-[12px]" viewBox="0 0 12 14"><path d="M0 0h8l4 4v10H0z" fill="#e8e8e8"/><path d="M4.500 4.500l-1 6M8 4.500l-1 6M2.500 6.500h7M2.500 8.500h7" stroke="#2a7a3a" stroke-width="1.100" fill="none"/></svg>
                    <span class="ml-[26px] font-semibold">Room List Item (Script)</span>
                    <span class="ml-auto flex items-center gap-[10px]"><svg class="h-[10px] w-[10px]"><use href="#help"/></svg><svg class="h-[10px] w-[11px]"><use href="#sliders"/></svg><svg class="ml-[2px] h-[10px] w-[3px]"><use href="#kebab"/></svg></span>
                </div>
                <div class="mt-[2px] flex h-5 items-center pl-[19px] text-[#7f7f7f]"><span class="w-[165px]">Script</span><div class="flex h-[18px] w-[251px] items-center justify-between rounded-[3px] border border-[#232323] bg-[#303030]"><span class="flex items-center gap-[3px] pl-[4px]"><svg class="h-[11px] w-[10px]" viewBox="0 0 10 11"><path d="M0 0h7l3 3v8H0z" fill="#7f7f7f"/><path d="M3 3l-.5 5M6.500 3L6 8" stroke="#2f5a38"/></svg>RoomListItem</span><span class="flex h-full w-[18px] items-center justify-center bg-[#383838]"><svg class="h-[11px] w-[11px]"><use href="#target"/></svg></span></div></div>
                <div class="flex h-5 items-center pl-[19px]"><span class="w-[165px]">Room Name Text</span><div class="flex h-[18px] w-[251px] items-center justify-between rounded-[3px] border border-[#232323] bg-[#2a2a2a]"><span class="flex items-center gap-[2px] pl-[2px]"><svg class="h-[12px] w-[12px]"><use href="#tmp"/></svg>RoomName (Text Mesh Pro UGUI)</span><span class="flex h-full w-[18px] items-center justify-center bg-[#383838]"><svg class="h-[11px] w-[11px]"><use href="#target"/></svg></span></div></div>
                <div class="flex h-5 items-center pl-[19px]"><span class="w-[165px]">Player Count Text</span><div class="flex h-[18px] w-[251px] items-center justify-between rounded-[3px] border border-[#232323] bg-[#2a2a2a]"><span class="flex items-center gap-[2px] pl-[2px]"><svg class="h-[12px] w-[12px]"><use href="#tmp"/></svg>MaxPlayer (Text Mesh Pro UGUI)</span><span class="flex h-full w-[18px] items-center justify-center bg-[#383838]"><svg class="h-[11px] w-[11px]"><use href="#target"/></svg></span></div></div>
                <div class="flex h-5 items-center pl-[19px]"><span class="w-[165px]">Join Button</span><div class="flex h-[18px] w-[251px] items-center justify-between rounded-[3px] border border-[#232323] bg-[#2a2a2a]"><span class="flex items-center gap-[3px] pl-[3px]"><svg class="h-[11px] w-[11px]" viewBox="0 0 11 11"><circle cx="5.500" cy="5.500" r="5" fill="none" stroke="#c4c4c4" stroke-dasharray="2 1"/><circle cx="5.500" cy="5.500" r="3.500" fill="#c4c4c4"/></svg>RoomListPrefab (Button)</span><span class="flex h-full w-[18px] items-center justify-center bg-[#383838]"><svg class="h-[11px] w-[11px]"><use href="#target"/></svg></span></div></div>

                <!-- default material -->
                <div class="relative mt-[6px] h-[55px] border-y border-[#232323] bg-[#3c3c3c]">
                    <svg class="absolute left-[6px] top-[38px] h-[10px] w-[10px] text-[#6f6f6f]"><use href="#right"/></svg>
                    <div class="flex h-full pl-[20px]">
                        <div class="mt-[10px] h-[24px] w-[24px] shrink-0 bg-white"></div>
                        <div class="ml-[9px] flex-1 pr-[5px]">
                            <div class="flex h-[13px] items-center justify-between pl-[3px] pt-[12px] text-[#8f8f8f]"><span>Default UI Material (Material)</span><span class="flex items-center gap-[10px]"><svg class="h-[10px] w-[10px]"><use href="#help"/></svg><svg class="h-[10px] w-[3px]"><use href="#kebab"/></svg></span></div>
                            <div class="mt-[16px] flex h-[18px] items-center text-[#7f7f7f]">
                                <span class="w-[52px]">Shader</span>
                                <div class="flex h-[16px] w-[237px] items-center justify-between rounded-[3px] bg-[#484848] px-[3px]">UI/Default<svg class="h-2 w-2"><use href="#down"/></svg></div>
                                <div class="ml-[4px] flex h-[16px] w-[43px] -translate-y-[2px] items-center justify-center rounded-[3px] bg-[#585858] text-[#c4c4c4]">Edit...</div>
                                <div class="ml-[5px] flex h-[16px] w-[42px] items-center justify-around rounded-[3px] bg-[#515151] text-[#c4c4c4]"><svg class="h-[10px] w-[12px]" viewBox="0 0 12 10"><path d="M2 2h10M2 5h10M2 8h10M0 1l1 1M0 4l1 1M0 7l1 1" stroke="currentColor" fill="none"/></svg><svg class="h-2 w-2"><use href="#down"/></svg></div>
                            </div>
                        </div>
                    </div>
                </div>
                <div class="mt-[9px] border-t border-[#232323] pl-[106px] pt-[9px]"><div class="flex h-[22px] w-[228px] justify-center rounded-[3px] bg-[#585858] pt-[5px] text-[#c4c4c4]">Add Component</div></div>
            </div>

            <!-- inspector scrollbar -->
            <div class="flex-1 border-l border-[#232323] bg-[#383838] pt-[3px]">
                <svg class="ml-[1px] h-[6px] w-[6px] rotate-180 text-[#c4c4c4]"><use href="#down"/></svg>
                <div class="ml-[1px] mt-[181px] h-[700px] w-[7px] rounded-l-[3px] bg-[#5d5d5d]"></div>
            </div>
        </aside>

        <!-- red annotations drawn over the screenshot -->
        <svg class="absolute inset-0 h-[864px] w-[1413px]" viewBox="0 0 1413 864">
            <g fill="none" stroke="#e51c1c" stroke-width="4.500">
                <path d="M822 60L1258 750"/>
                <path d="M811 78L1141 703"/>
                <path d="M767 103L1144 735"/>
            </g>
            <rect x="967" y="659.500" width="436" height="129" fill="none" stroke="#e51c1c" stroke-width="3.500"/>
            <g fill="#e51c1c">
                <path d="M1267 768L1250 754 1267 746z"/>
                <path d="M1149 719L1133 707 1149 699z"/>
                <path d="M1154 751L1136 739 1152 730z"/>
            </g>
        </svg>
    </div>

</body>

</html>
